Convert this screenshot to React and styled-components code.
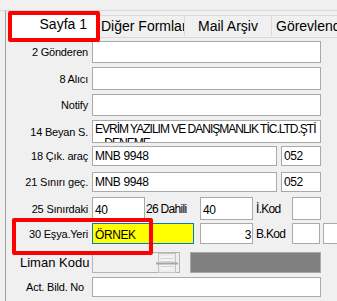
import React from "react";
import styled, { createGlobalStyle } from "styled-components";

const GlobalStyle = createGlobalStyle`
  html, body {
    margin: 0;
    padding: 0;
    background: #f0f0f0;
  }
  body {
    font-family: "Liberation Sans", Arial, sans-serif;
    color: #000;
  }
`;

const Screen = styled.div`
  position: relative;
  width: 337px;
  height: 301px;
  overflow: hidden;
  background: #f0f0f0;
`;

const TopBar = styled.div`
  height: 10px;
  border-bottom: 1px solid #d6d6d6;
`;

const Body = styled.div`
  display: flex;
  height: 290px;
`;

const Edge = styled.div`
  flex: none;
  width: 5px;
  border-right: 1px solid #a0a0a0;
`;

const TabControl = styled.div`
  flex: 1;
  min-width: 0;
  margin-left: 2px;
  display: flex;
  flex-direction: column;
`;

const TabStrip = styled.div`
  display: flex;
  align-items: flex-start;
  height: 26px;
  flex: none;
`;

const ActiveTab = styled.div`
  position: relative;
  z-index: 1;
  flex: none;
  box-sizing: border-box;
  width: 92px;
  height: 31px;
  background: #fff;
  border: 4px solid #ff0000;
  border-radius: 2px;
  padding: 1px 9px 0 0;
  font-size: 14px;
  line-height: 16px;
  text-align: right;
  white-space: nowrap;
`;

const Tab = styled.div`
  flex: none;
  box-sizing: border-box;
  width: ${(p) => p.$w}px;
  height: 21px;
  margin-top: 4px;
  border-top: 1px solid #d9d9d9;
  border-right: 1px solid #d9d9d9;
  padding: 2px ${(p) => p.$pad}px 0;
  font-size: 14px;
  line-height: 16px;
  text-align: ${(p) => p.$align || "center"};
  white-space: nowrap;
  overflow: hidden;
`;

const Page = styled.div`
  flex: 1;
  border-top: 1px solid #d9d9d9;
  padding-top: 3px;
`;

const Row = styled.div`
  display: flex;
  align-items: stretch;
  height: ${(p) => p.$h}px;
  margin-top: ${(p) => p.$mt || 0}px;
`;

const Label = styled.div`
  flex: none;
  box-sizing: border-box;
  width: 84px;
  display: flex;
  align-items: center;
  justify-content: flex-end;
  padding-right: ${(p) => (p.$pr === undefined ? 4 : p.$pr)}px;
  font-size: 11px;
  letter-spacing: -0.2px;
  white-space: nowrap;
`;

const BigLabel = styled.div`
  flex: none;
  box-sizing: border-box;
  width: 84px;
  display: flex;
  align-items: center;
  padding-left: 12px;
  font-size: 13px;
  white-space: nowrap;
  overflow: hidden;
`;

const InlineLabel = styled.div`
  flex: none;
  box-sizing: border-box;
  width: ${(p) => p.$w}px;
  display: flex;
  align-items: center;
  padding-left: ${(p) => p.$pl}px;
  font-size: 12px;
  letter-spacing: -0.7px;
  white-space: nowrap;
`;

const Box = styled.div`
  flex: none;
  box-sizing: border-box;
  width: ${(p) => p.$w}px;
  margin-left: ${(p) => p.$ml || 0}px;
  background: ${(p) => p.$bg || "#fff"};
  border: 1px solid ${(p) => p.$border || "#a9a9a9"};
  padding: ${(p) => p.$pt || 0}px 1px 0 2px;
  font-size: 12px;
  letter-spacing: ${(p) => (p.$ls === undefined ? -0.4 : p.$ls)}px;
  line-height: 14px;
  text-align: ${(p) => p.$align || "left"};
  white-space: pre;
  overflow: hidden;
`;

const Combo = styled.div`
  flex: none;
  box-sizing: border-box;
  width: 88px;
  background: #f0f0f0;
  border: 1px solid #b4b4b4;
  display: flex;
  align-items: center;
  justify-content: flex-end;
  padding-right: 1px;
`;

const DarkBox = styled.div`
  flex: none;
  box-sizing: border-box;
  width: 131px;
  margin-left: 10px;
  background: #808080;
  border: 1px solid #a8a8a8;
`;

const Marker = styled.div`
  position: absolute;
  left: 12px;
  top: 218px;
  width: 141px;
  height: 37px;
  box-sizing: border-box;
  border: 4px solid #ff0000;
  border-radius: 2px;
  pointer-events: none;
`;

const ComboButton = () => (
  <svg width="22" height="20" viewBox="0 0 22 20">
    <rect x="2.5" y="0.5" width="17" height="19" fill="#ececec" stroke="#c4c4c4" />
    <rect x="5" y="3" width="12" height="14" fill="#f4f4f4" />
    <line x1="5" y1="5.5" x2="17" y2="5.5" stroke="#d2d2d2" />
    <line x1="5" y1="8.5" x2="17" y2="8.5" stroke="#d2d2d2" />
    <line x1="5" y1="13.5" x2="17" y2="13.5" stroke="#d2d2d2" />
    <rect x="0" y="9.5" width="22" height="2" fill="#a4a4a4" />
  </svg>
);

export default function App() {
  return (
    <Screen>
      <GlobalStyle />
      <TopBar />
      <Body>
        <Edge />
        <TabControl>
          <TabStrip>
            <ActiveTab>Sayfa 1</ActiveTab>
            <Tab $w={85} $pad={1}>Diğer Formları</Tab>
            <Tab $w={87} $pad={2}>Mail Arşiv</Tab>
            <Tab $w={90} $pad={4} $align="left">Görevlendirme</Tab>
          </TabStrip>
          <Page>
            <Row $h={22}>
              <Label>2 Gönderen</Label>
              <Box $w={229} />
            </Row>
            <Row $h={23} $mt={4}>
              <Label>8 Alıcı</Label>
              <Box $w={229} />
            </Row>
            <Row $h={22} $mt={4}>
              <Label>Notify</Label>
              <Box $w={229} />
            </Row>
            <Row $h={23} $mt={4}>
              <Label>14 Beyan S.</Label>
              <Box $w={229} $pt={1} $ls={-1}>
                {"EVRİM YAZILIM VE DANIŞMANLIK TİC.LTD.ŞTİ\n    DENEME"}
              </Box>
            </Row>
            <Row $h={20} $mt={3}>
              <Label>18 Çık. araç</Label>
              <Box $w={185} $pt={2}>MNB 9948</Box>
              <Box $w={40} $ml={4} $pt={2}>052</Box>
            </Row>
            <Row $h={20} $mt={6}>
              <Label>21 Sınırı geç.</Label>
              <Box $w={185} $pt={2}>MNB 9948</Box>
              <Box $w={40} $ml={4} $pt={2}>052</Box>
            </Row>
            <Row $h={23} $mt={5}>
              <Label>25 Sınırdaki</Label>
              <Box $w={53} $pt={5}>40</Box>
              <InlineLabel $w={55} $pl={1}>26 Dahili</InlineLabel>
              <Box $w={53} $pt={5}>40</Box>
              <InlineLabel $w={39} $pl={3}>İ.Kod</InlineLabel>
              <Box $w={29} />
            </Row>
            <Row $h={21} $mt={3}>
              <Label>30 Eşya.Yeri</Label>
              <Box $w={102} $bg="#ffff00" $border="#0078d7" $pt={4}>ÖRNEK</Box>
              <Box $w={53} $ml={6} $pt={4} $align="right">3</Box>
              <InlineLabel $w={39} $pl={3}>B.Kod</InlineLabel>
              <Box $w={28} />
              <Box $w={40} $ml={3} />
            </Row>
            <Row $h={21} $mt={8}>
              <BigLabel>Liman Kodu</BigLabel>
              <Combo>
                <ComboButton />
              </Combo>
              <DarkBox />
            </Row>
            <Row $h={20} $mt={4}>
              <Label $pr={8}>Act. Bild. No</Label>
              <Box $w={229} />
            </Row>
          </Page>
        </TabControl>
      </Body>
      <Marker />
    </Screen>
  );
}
